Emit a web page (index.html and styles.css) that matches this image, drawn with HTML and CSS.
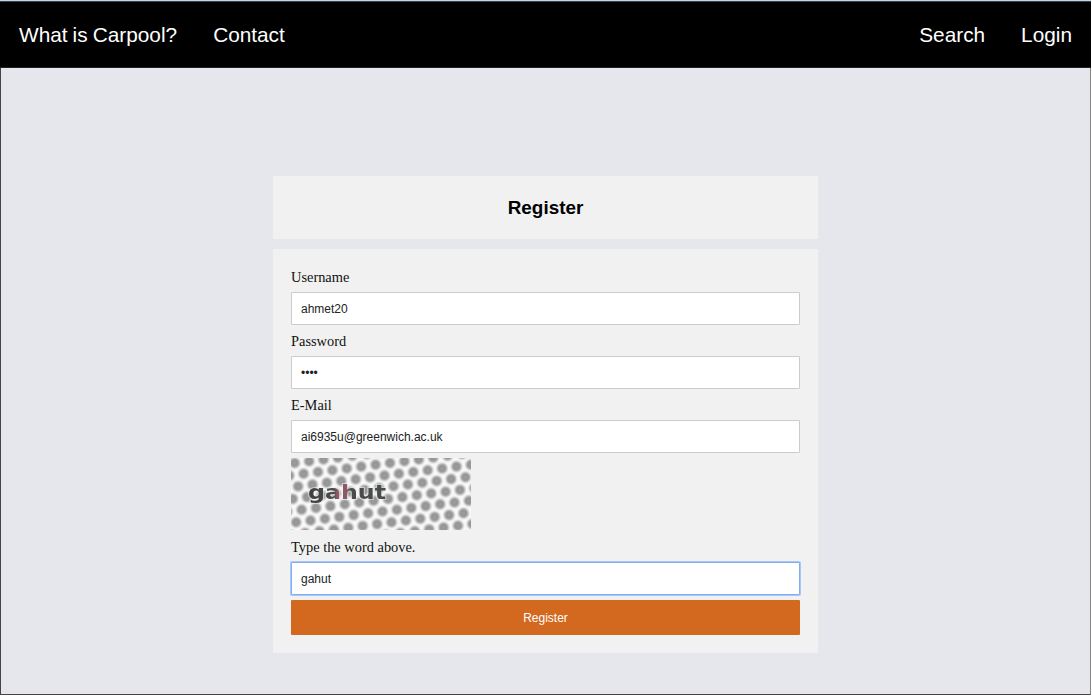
FILE: index.html
```html
<!DOCTYPE html>
<html lang="en">
<head>
<meta charset="utf-8">
<title>Register</title>
<link rel="stylesheet" href="styles.css">
</head>
<body>
<nav class="nav">
  <div class="nav-group"><a>What is Carpool?</a><a>Contact</a></div>
  <div class="nav-group"><a>Search</a><a>Login</a></div>
</nav>
<main class="page">
  <header class="header"><h2>Register</h2></header>
  <form class="form">
    <label for="user">Username</label>
    <input id="user" type="text" value="ahmet20">
    <label for="pass">Password</label>
    <input id="pass" class="password" type="password" value="1234">
    <label for="mail">E-Mail</label>
    <input id="mail" type="text" value="ai6935u@greenwich.ac.uk">
    <svg class="captcha" width="180" height="72" viewBox="0 0 180 72">
      <defs>
        <path id="dots" class="dots" d="M-288 36L288 -36"/>
        <path id="cores" class="cores" d="M-288 36L288 -36"/>
        <g id="row"><use href="#dots"/><use href="#cores"/></g>
        <linearGradient id="ink" gradientUnits="userSpaceOnUse" x1="18" y1="0" x2="96" y2="0">
          <stop offset="0" stop-color="#3c4240"/>
          <stop offset=".32" stop-color="#4b4a4b"/>
          <stop offset=".36" stop-color="#8c5964"/>
          <stop offset=".49" stop-color="#8c5964"/>
          <stop offset=".53" stop-color="#484c4a"/>
          <stop offset="1" stop-color="#484c4a"/>
        </linearGradient>
      </defs>
      <rect width="180" height="72" fill="#fafafa"/>
      <g class="soft">
        <use href="#row" x="9.1" y="-7.5"/>
        <use href="#row" x="18.1" y="3.2"/>
        <use href="#row" x="27" y="14"/>
        <use href="#row" x="35.9" y="24.8"/>
        <use href="#row" x="44.9" y="35.5"/>
        <use href="#row" x="53.8" y="46.3"/>
        <use href="#row" x="62.7" y="57.1"/>
        <use href="#row" x="71.7" y="67.9"/>
        <use href="#row" x="80.6" y="78.6"/>
      </g>
      <text class="word" x="17" y="41" textLength="78" lengthAdjust="spacingAndGlyphs" fill="url(#ink)">gahut</text>
    </svg>
    <label for="word">Type the word above.</label>
    <input id="word" class="active" type="text" value="gahut">
    <button type="button">Register</button>
  </form>
</main>
</body>
</html>
```
FILE: styles.css
```css
* { box-sizing: border-box; }
body {
  margin: 0;
  height: 695px;
  overflow: hidden;
  background: #e6e7ec;
  border-top: 1px solid #c3d5e8;
  display: flex;
  flex-direction: column;
}
.nav {
  flex: none;
  height: 67px;
  background: #000;
  border-top: 1px solid #38424d;
  border-bottom: 1px solid #222;
  padding: 1px 19px 0;
  display: flex;
  justify-content: space-between;
  align-items: center;
  color: #fff;
  font: 20.8px "Liberation Sans", Arial, sans-serif;
  word-spacing: -.7px;
}
.nav-group { display: flex; gap: 36px; }
.page {
  flex: 1;
  border: 1px solid #444;
  border-top: 0;
  border-right-color: #858585;
  padding: 108px 272px 0;
}
.header {
  height: 63px;
  background: #f1f1f1;
  display: flex;
  align-items: center;
  justify-content: center;
}
.header h2 {
  margin: 0;
  font: bold 18.9px "Liberation Sans", Arial, sans-serif;
}
.form {
  margin-top: 10px;
  height: 404px;
  padding: 18px 18px 0;
  background: #f1f1f1;
  display: flex;
  flex-direction: column;
}
.form label {
  flex: none;
  height: 20px;
  margin-bottom: 5px;
  line-height: 20px;
  font-family: "Liberation Serif", "Times New Roman", serif;
  font-size: 14.4px;
  color: #111;
}
.form input {
  flex: none;
  height: 33px;
  margin-bottom: 6px;
  padding: 0 9px;
  border: 1px solid #ccc;
  border-radius: 1px;
  background: #fff;
  color: #222;
  font: 12px "Liberation Sans", Arial, sans-serif;
  outline: 0;
}
.form .active {
  border-color: #82adf1;
  box-shadow: 0 0 0 1px #a9c8f8;
  margin-bottom: 5px;
}
.form button {
  flex: none;
  height: 35px;
  border: 0;
  border-radius: 1px;
  background: #d2691e;
  color: #fff;
  font: 12px "Liberation Sans", Arial, sans-serif;
}
.captcha {
  flex: none;
  margin: -1px 0 7px;
}
.dots, .cores {
  fill: none;
  stroke: #929292;
  stroke-width: 10;
  stroke-linecap: round;
  stroke-dasharray: 0 14.512;
}
.cores { stroke: #a5a5a5; stroke-width: 3; }
.soft { filter: blur(.9px); }
.word {
  font: bold 20px "DejaVu Sans", sans-serif;
  stroke: rgba(240, 240, 240, .55);
  stroke-width: 2px;
  paint-order: stroke;
  filter: blur(.4px);
}
```
